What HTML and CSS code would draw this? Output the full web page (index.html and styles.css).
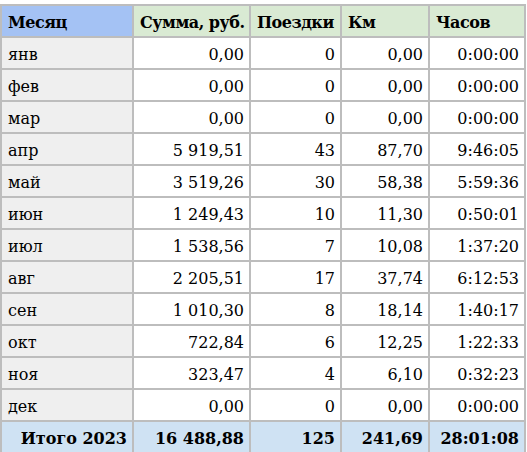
FILE: index.html
```html
<!DOCTYPE html>
<html lang="ru">
<head>
  <meta charset="UTF-8" />
  <title>Поездки 2023</title>
  <link rel="stylesheet" href="styles.css">
</head>
<body>
  <table class="sheet">
    <colgroup>
      <col class="c-month"><col class="c-sum"><col class="c-trips"><col class="c-km"><col class="c-hours">
    </colgroup>
    <thead>
      <tr>
        <th class="h-month">Месяц</th>
        <th>Сумма, руб.</th>
        <th>Поездки</th>
        <th>Км</th>
        <th>Часов</th>
      </tr>
    </thead>
    <tbody>
      <tr><td class="month">янв</td><td>0,00</td><td>0</td><td>0,00</td><td>0:00:00</td></tr>
      <tr><td class="month">фев</td><td>0,00</td><td>0</td><td>0,00</td><td>0:00:00</td></tr>
      <tr><td class="month">мар</td><td>0,00</td><td>0</td><td>0,00</td><td>0:00:00</td></tr>
      <tr><td class="month">апр</td><td>5 919,51</td><td>43</td><td>87,70</td><td>9:46:05</td></tr>
      <tr><td class="month">май</td><td>3 519,26</td><td>30</td><td>58,38</td><td>5:59:36</td></tr>
      <tr><td class="month">июн</td><td>1 249,43</td><td>10</td><td>11,30</td><td>0:50:01</td></tr>
      <tr><td class="month">июл</td><td>1 538,56</td><td>7</td><td>10,08</td><td>1:37:20</td></tr>
      <tr><td class="month">авг</td><td>2 205,51</td><td>17</td><td>37,74</td><td>6:12:53</td></tr>
      <tr><td class="month">сен</td><td>1 010,30</td><td>8</td><td>18,14</td><td>1:40:17</td></tr>
      <tr><td class="month">окт</td><td>722,84</td><td>6</td><td>12,25</td><td>1:22:33</td></tr>
      <tr><td class="month">ноя</td><td>323,47</td><td>4</td><td>6,10</td><td>0:32:23</td></tr>
      <tr><td class="month">дек</td><td>0,00</td><td>0</td><td>0,00</td><td>0:00:00</td></tr>
    </tbody>
    <tfoot>
      <tr class="total">
        <td>Итого 2023</td><td>16 488,88</td><td>125</td><td>241,69</td><td>28:01:08</td>
      </tr>
    </tfoot>
  </table>
</body>
</html>
```

FILE: styles.css
```css
body {
  margin: 4px 0 0 0;
  background: #fff;
  font-family: "DejaVu Serif", serif;
  color: #000;
}
.sheet {
  border-collapse: separate;
  border-spacing: 2px;
  background: #bdbdbd;
  table-layout: fixed;
  width: 526px;
  font-size: 16px;
}
.c-month { width: 130px; }
.c-sum { width: 115px; }
.c-trips { width: 89px; }
.c-km { width: 86px; }
.c-hours { width: 94px; }

.sheet th,
.sheet td {
  height: 30px;
  padding: 0 5px 4px 6px;
  box-sizing: border-box;
  vertical-align: bottom;
  white-space: nowrap;
  overflow: hidden;
}
.sheet th {
  background: #d9ead3;
  font-weight: bold;
  text-align: left;
  letter-spacing: -0.5px;
}
.sheet th.h-month {
  background: #a4c2f4;
}
.sheet td {
  background: #fff;
  text-align: right;
}
.sheet td.month {
  background: #efefef;
  text-align: left;
}
/* строка итогов */
.sheet tr.total td {
  background: #cfe2f3;
  font-weight: bold;
}
```
